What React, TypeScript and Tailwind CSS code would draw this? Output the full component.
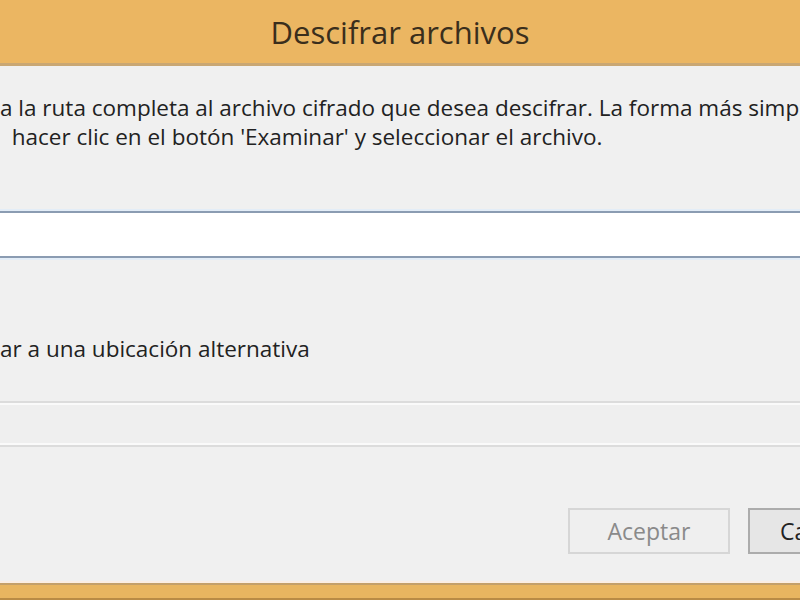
export default function App() {
    return (
        <div className="w-[800px] h-[600px] overflow-hidden flex flex-col bg-[#f0f0f0] font-['Open_Sans',sans-serif]">
            {/* Title bar */}
            <div className="h-[66px] shrink-0 flex items-center justify-center bg-[#ebb662] border-b-[3px] border-[#c9a773]">
                <h1 className="text-[31px] text-[#3a2e1c] pt-[2px]">
                    Descifrar archivos
                </h1>
            </div>

            {/* Body */}
            <div className="flex-1 flex flex-col overflow-hidden">
                <div className="pt-[27px] text-[22.5px] leading-[29px] text-[#222] whitespace-pre">
                    <p>a la ruta completa al archivo cifrado que desea descifrar. La forma más simp</p>
                    <p>  hacer clic en el botón 'Examinar' y seleccionar el archivo.</p>
                </div>

                {/* Path input */}
                <div className="mt-[60px] h-[47px] bg-white border-y-2 border-[#8b9cb2] shadow-[0_-2px_0_#e3edf7,0_2px_0_#e3edf7]" />

                <p className="mt-[76px] text-[22.5px] leading-[29px] text-[#222] whitespace-pre">
                    ar a una ubicación alternativa
                </p>

                {/* Disabled input */}
                <div className="mt-[38px] h-[46px] border-y-2 border-[#dcdcdc] bg-[#efefef] shadow-[inset_0_2px_0_#fafafa,inset_0_-2px_0_#fafafa]" />

                {/* Buttons */}
                <div className="mt-[61px] flex justify-end gap-[18px] -mr-[70px]">
                    <button className="w-[162px] h-[46px] border-2 border-[#d6d6d6] bg-[#efefef] text-[23px] text-[#8a8a8a]">
                        Aceptar
                    </button>
                    <button className="w-[122px] h-[46px] border-2 border-[#acacac] bg-[#e6e6e6] text-[23px] text-[#222] text-left pl-[30px]">
                        Cancelar
                    </button>
                </div>
            </div>

            {/* Bottom frame */}
            <div className="h-[17px] shrink-0 bg-[#e8b560] border-t-2 border-[#c4a06a] border-b-2 border-b-[#b98b45] shadow-[0_-2px_0_#fbeee3]" />
        </div>
    );
}
